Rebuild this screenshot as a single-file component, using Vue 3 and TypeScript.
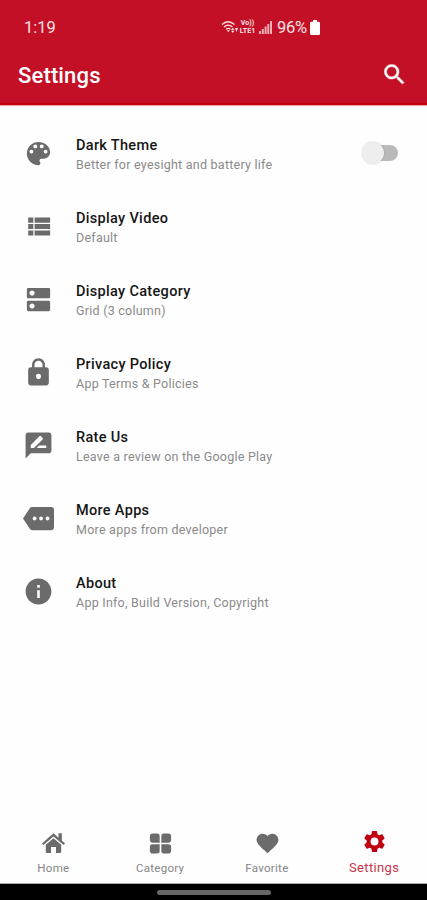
<script setup lang="ts">
interface SettingItem {
  title: string
  note: string
  icon: string
  toggle?: boolean
}

interface Tab {
  label: string
  icon: string
  active?: boolean
}

const items: SettingItem[] = [
  {
    title: 'Dark Theme',
    note: 'Better for eyesight and battery life',
    toggle: true,
    icon: 'M12 3a9 9 0 0 0 0 18c.83 0 1.5-.67 1.5-1.5 0-.39-.15-.74-.39-1.01-.23-.26-.38-.61-.38-.99 0-.83.67-1.5 1.5-1.5H16c2.76 0 5-2.24 5-5 0-4.42-4.03-8-9-8zm-5.5 9a1.5 1.5 0 1 1 0-3 1.5 1.5 0 0 1 0 3zm3-4a1.5 1.5 0 1 1 0-3 1.5 1.5 0 0 1 0 3zm5 0a1.5 1.5 0 1 1 0-3 1.5 1.5 0 0 1 0 3zm3 4a1.5 1.5 0 1 1 0-3 1.5 1.5 0 0 1 0 3z',
  },
  {
    title: 'Display Video',
    note: 'Default',
    icon: 'M4 14h4v-4H4v4zm0 5h4v-4H4v4zM4 9h4V5H4v4zm5 5h12v-4H9v4zm0 5h12v-4H9v4zM9 5v4h12V5H9z',
  },
  {
    title: 'Display Category',
    note: 'Grid (3 column)',
    icon: 'M20 13H4c-.55 0-1 .45-1 1v6c0 .55.45 1 1 1h16c.55 0 1-.45 1-1v-6c0-.55-.45-1-1-1zM7 19c-1.1 0-2-.9-2-2s.9-2 2-2 2 .9 2 2-.9 2-2 2zM20 3H4c-.55 0-1 .45-1 1v6c0 .55.45 1 1 1h16c.55 0 1-.45 1-1V4c0-.55-.45-1-1-1zM7 9c-1.1 0-2-.9-2-2s.9-2 2-2 2 .9 2 2-.9 2-2 2z',
  },
  {
    title: 'Privacy Policy',
    note: 'App Terms & Policies',
    icon: 'M18 8h-1V6c0-2.76-2.24-5-5-5S7 3.240 7 6v2H6c-1.100 0-2 .9-2 2v10c0 1.100.9 2 2 2h12c1.100 0 2-.9 2-2V10c0-1.100-.9-2-2-2zm-6 9c-1.100 0-2-.9-2-2s.9-2 2-2 2 .9 2 2-.9 2-2 2zm3.100-9H8.900V6c0-1.710 1.390-3.100 3.100-3.100 1.710 0 3.100 1.390 3.100 3.100v2z',
  },
  {
    title: 'Rate Us',
    note: 'Leave a review on the Google Play',
    icon: 'M20 2H4c-1.100 0-1.990.9-1.990 2L2 22l4-4h14c1.100 0 2-.9 2-2V4c0-1.100-.9-2-2-2zM6 14v-2.470l6.880-6.880c.2-.2.510-.2.710 0l1.770 1.770c.2.200.2.510 0 .710L8.470 14H6zm12 0h-7.500l2-2H18v2z',
  },
  {
    title: 'More Apps',
    note: 'More apps from developer',
    icon: 'M22 3H7c-.69 0-1.230.350-1.590.880L0 12l5.410 8.110c.360.530.970.890 1.660.890H22c1.100 0 2-.9 2-2V5c0-1.100-.9-2-2-2zM9 13.500c-.830 0-1.500-.670-1.500-1.500s.670-1.500 1.500-1.500 1.500.670 1.500 1.500-.670 1.500-1.500 1.500zm5 0c-.830 0-1.500-.670-1.500-1.500s.670-1.500 1.500-1.500 1.500.670 1.500 1.500-.670 1.500-1.500 1.500zm5 0c-.830 0-1.500-.670-1.500-1.500s.670-1.500 1.500-1.500 1.500.670 1.500 1.500-.670 1.500-1.500 1.500z',
  },
  {
    title: 'About',
    note: 'App Info, Build Version, Copyright',
    icon: 'M12 2C6.480 2 2 6.480 2 12s4.480 10 10 10 10-4.480 10-10S17.520 2 12 2zm1 15h-2v-6h2v6zm0-8h-2V7h2v2z',
  },
]

const tabs: Tab[] = [
  {
    label: 'Home',
    icon: 'M12 7 4.600 13.300v6.900c0 .5.300.800.800.800h4.200v-5.600h4.800V21h4.200c.5 0 .8-.3.8-.8v-6.900zM12 2.200.9 11.900l1.400 1.600L12 5.200l9.700 8.300 1.400-1.600-3.100-2.700V2.200h-3.200v4.200z',
  },
  {
    label: 'Category',
    icon: 'M4.500 2.500H9a2.200 2.200 0 0 1 2.200 2.200v6.500H4.500a2.700 2.700 0 0 1-2.700-2.700V5.200a2.700 2.700 0 0 1 2.700-2.700zM15 2.500h4.500a2.700 2.700 0 0 1 2.700 2.700v3.300a2.700 2.700 0 0 1-2.700 2.700h-6.700V4.700A2.200 2.200 0 0 1 15 2.500zM4.500 12.800h6.700v6.700A2.200 2.200 0 0 1 9 21.700H4.500A2.700 2.700 0 0 1 1.800 19v-3.500a2.700 2.700 0 0 1 2.700-2.700zM12.800 12.800h6.700a2.700 2.700 0 0 1 2.700 2.700V19a2.700 2.700 0 0 1-2.700 2.700H15a2.200 2.200 0 0 1-2.200-2.200z',
  },
  {
    label: 'Favorite',
    icon: 'M12 21.350l-1.450-1.320C5.400 15.360 1.500 12.280 1.500 8.500 1.500 5.200 4.200 2.600 7.500 2.600c1.740 0 3.410.900 4.500 2.200 1.090-1.300 2.760-2.200 4.500-2.200 3.300 0 6 2.600 6 5.900 0 3.780-3.900 6.860-9.050 11.540L12 21.350z',
  },
  {
    label: 'Settings',
    active: true,
    icon: 'M19.430 12.980c.040-.320.070-.640.070-.980s-.030-.660-.070-.980l2.110-1.650c.190-.150.240-.420.120-.640l-2-3.460c-.120-.220-.390-.3-.610-.220l-2.490 1c-.520-.4-1.080-.730-1.690-.980l-.380-2.650C14.460 2.180 14.250 2 14 2h-4c-.250 0-.460.180-.490.420l-.380 2.650c-.610.250-1.170.590-1.690.980l-2.490-1c-.230-.090-.490 0-.610.220l-2 3.460c-.130.220-.070.490.120.640l2.110 1.650c-.040.320-.070.650-.070.980s.030.660.070.980l-2.110 1.650c-.190.150-.240.420-.120.640l2 3.460c.120.220.390.3.610.220l2.490-1c.520.4 1.080.730 1.690.980l.380 2.650c.030.240.240.420.490.420h4c.250 0 .460-.180.490-.420l.380-2.650c.610-.250 1.170-.590 1.690-.980l2.490 1c.230.090.490 0 .610-.220l2-3.460c.120-.220.070-.490-.120-.640l-2.110-1.650zM12 15.800a3.800 3.800 0 1 1 0-7.600 3.800 3.800 0 0 1 0 7.600z',
  },
]
</script>

<template>
  <div class="screen">
    <header class="header">
      <div class="status">
        <span class="clock">1:19</span>
        <div class="indicators">
          <svg class="wifi" viewBox="0 0 17 14">
            <g fill="none" stroke="currentColor" stroke-width="1.3">
              <path d="M1 4.500Q7 -1 13.500 4.500" />
              <path d="M3 7Q7.200 3.300 11.500 7" />
              <path d="M5 9.300Q7.200 7.500 9.500 9.300" />
            </g>
            <path d="M5.800 10.300h3L7.300 12.300zM10 10l1.800-2.200L13.500 10zM10 10.800h3.500l-1.700 2.200zM14 8h3l-1.500 4z" />
          </svg>
          <span class="volte"><span>Vo))</span><span>LTE1</span></span>
          <svg class="signal" viewBox="0 0 13 13">
            <path d="M0 10h2v3H0zM2.800 8h2v5h-2zM5.600 5.500h2V13h-2zM8.300 3h1.900v10H8.300zM11 0h2v13h-2z" />
          </svg>
          <span class="percent">96%</span>
          <svg class="battery" viewBox="0 0 10 15">
            <path d="M3 0h4v1.800h1.500A1.500 1.500 0 0 1 10 3.300v10.200A1.500 1.500 0 0 1 8.500 15h-7A1.500 1.500 0 0 1 0 13.500V3.300a1.500 1.500 0 0 1 1.500-1.500H3z" />
          </svg>
        </div>
      </div>
      <div class="bar">
        <h1>Settings</h1>
        <svg class="search" viewBox="0 0 24 24">
          <path d="M15.500 14h-.790l-.280-.270C15.410 12.590 16 11.110 16 9.500 16 5.910 13.090 3 9.500 3S3 5.910 3 9.500 5.910 16 9.500 16c1.610 0 3.090-.590 4.230-1.570l.270.280v.790l5 4.990L20.490 19l-4.990-5zm-6 0C7.010 14 5 11.990 5 9.500S7.010 5 9.500 5 14 7.010 14 9.500 11.990 14 9.500 14z" />
        </svg>
      </div>
    </header>

    <main class="list">
      <div v-for="item in items" :key="item.title" class="row">
        <svg class="row-icon" viewBox="0 0 24 24"><path :d="item.icon" fill-rule="evenodd" /></svg>
        <div class="copy">
          <div class="title">{{ item.title }}</div>
          <div class="note">{{ item.note }}</div>
        </div>
        <div v-if="item.toggle" class="switch"><span class="knob"></span></div>
      </div>
    </main>

    <nav class="tabs">
      <div v-for="tab in tabs" :key="tab.label" class="tab" :class="{ active: tab.active }">
        <svg viewBox="0 0 24 24"><path :d="tab.icon" fill-rule="evenodd" /></svg>
        <span>{{ tab.label }}</span>
      </div>
    </nav>
    <div class="gesture"><span class="pill"></span></div>
  </div>
</template>

<style>
body {
  background: #fefefe;
}
</style>

<style scoped>
.screen {
  display: flex;
  flex-direction: column;
  width: 427px;
  height: 900px;
  overflow: hidden;
  background: #fefefe;
  font-family: Roboto, 'Noto Sans', sans-serif;
}

svg {
  display: block;
  flex: none;
  fill: currentColor;
}

.header {
  box-sizing: border-box;
  flex: none;
  height: 105px;
  background: #c41026;
  border-bottom: 2px solid #c3000f;
  box-shadow: 0 1px 1px #e9a5aa;
  color: #fff;
}

.status {
  display: flex;
  align-items: center;
  height: 54px;
  padding-left: 24px;
  color: #fbe4e6;
}

.clock {
  width: 197px;
  font-size: 16.5px;
}

.indicators {
  display: flex;
  align-items: center;
}

.wifi {
  width: 17px;
  height: 14px;
}

.volte {
  display: flex;
  flex-direction: column;
  width: 17px;
  margin-left: 1px;
  font-size: 7px;
  font-weight: 700;
  line-height: 8px;
  text-align: center;
}

.signal {
  width: 13px;
  height: 13px;
  margin-left: 3px;
  opacity: 0.75;
}

.percent {
  width: 33px;
  margin-left: 5px;
  font-size: 16.5px;
  letter-spacing: -0.3px;
}

.battery {
  width: 10px;
  height: 15px;
  color: #fff;
}

.bar {
  display: flex;
  align-items: center;
  justify-content: space-between;
  height: 42px;
  padding: 0 19px 0 18px;
}

h1 {
  margin: 0;
  font-size: 22px;
  font-weight: 500;
  letter-spacing: 0.15px;
}

.search {
  width: 27px;
  height: 27px;
  margin-top: -2px;
}

.search path {
  stroke: currentColor;
  stroke-width: 0.4;
}

.list {
  display: grid;
  flex: 1;
  grid-auto-rows: 73.1px;
  align-content: start;
  padding-top: 11.5px;
}

.row {
  display: flex;
  align-items: center;
  padding: 0 29px 0 22.5px;
}

.row-icon {
  width: 31px;
  height: 31px;
  color: #6b6b6b;
}

.copy {
  flex: 1;
  margin-left: 22.5px;
  padding-top: 3px;
}

.title {
  color: #161616;
  font-size: 14.5px;
  font-weight: 500;
  line-height: 19px;
  letter-spacing: 0.32px;
}

.note {
  color: #8a8a8a;
  font-size: 12.5px;
  line-height: 19px;
  letter-spacing: 0.24px;
}

.switch {
  display: flex;
  align-items: center;
  box-sizing: border-box;
  width: 32px;
  height: 16px;
  border-radius: 8px;
  background: #b9b9b9;
}

.knob {
  flex: none;
  width: 22px;
  height: 22px;
  margin-left: -4px;
  border-radius: 50%;
  background: #eee;
  box-shadow: 0 0 2px rgba(0, 0, 0, 0.2);
}

.tabs {
  display: grid;
  flex: none;
  grid-template-columns: repeat(4, 1fr);
  height: 63px;
  border-bottom: 1px solid #aaa;
}

.tab {
  display: flex;
  flex-direction: column;
  align-items: center;
  padding-top: 11px;
  color: #6b6b6b;
}

.tab svg {
  width: 25px;
  height: 25px;
  margin-left: 1px;
}

.tab span {
  margin-top: 4px;
  color: #858585;
  font-size: 11.5px;
  line-height: 16px;
  letter-spacing: 0.3px;
}

.tab.active {
  padding-top: 9px;
  color: #c00012;
}

.tab.active span {
  margin-top: 6px;
  margin-left: 1px;
  color: #c9354a;
  font-size: 13px;
  letter-spacing: 0.35px;
}

.gesture {
  display: flex;
  flex: none;
  justify-content: center;
  height: 16px;
  background: #000;
}

.pill {
  width: 114px;
  height: 5px;
  margin-top: 6px;
  border-radius: 3px;
  background: #666;
}
</style>
